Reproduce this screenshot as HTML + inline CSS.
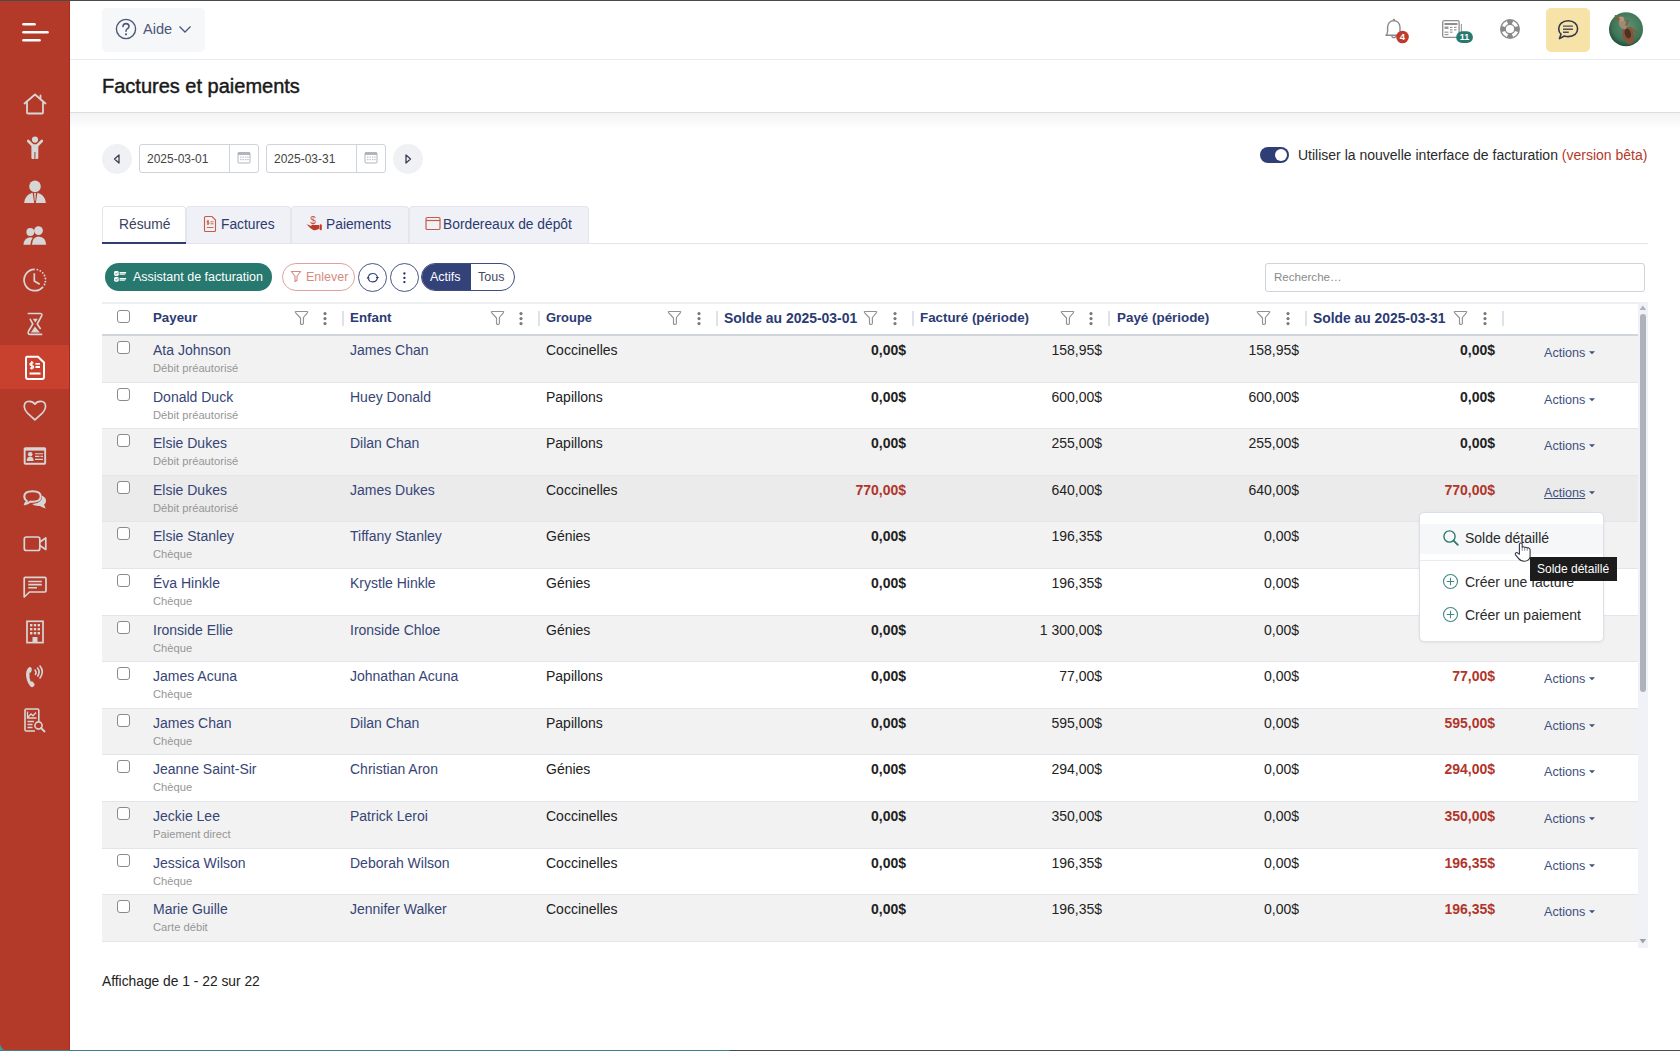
<!DOCTYPE html>
<html><head><meta charset="utf-8"><style>
*{box-sizing:border-box}
html,body{margin:0;padding:0}
body{width:1680px;height:1051px;overflow:hidden;position:relative;background:#fff;font-family:"Liberation Sans",sans-serif;color:#222}
.abs{position:absolute}
.si{position:absolute}
.t{position:absolute;white-space:nowrap;line-height:1}
.row{position:absolute;left:102px;width:1536px;border-bottom:1px solid #e3e5ea}
.cb{position:absolute;width:13px;height:13px;border:1.8px solid #8a8a8a;border-radius:3px;background:#fff}
.nm{position:absolute;white-space:nowrap;line-height:1;font-size:14px;color:#374576}
.sub{position:absolute;white-space:nowrap;line-height:1;font-size:11.2px;color:#969696}
.grp{position:absolute;white-space:nowrap;line-height:1;font-size:14px;color:#222}
.num{position:absolute;white-space:nowrap;line-height:1;font-size:14px;color:#222;text-align:right}
.b{font-weight:bold}
.red{color:#b0352b}
.act{position:absolute;white-space:nowrap;line-height:1;font-size:12.6px;color:#3e4f80}
.hd{position:absolute;white-space:nowrap;line-height:1;font-size:14.5px;font-weight:bold;color:#2b3b73}
.sep{position:absolute;width:1.5px;height:15px;background:#dfe2ea}
</style></head><body>

<div class="abs" style="left:0;top:0;width:1680px;height:1px;background:#4a4a4a;z-index:50"></div>
<div class="abs" style="left:0;top:1050px;width:1680px;height:1px;background:linear-gradient(90deg,#3f7f86 0,#3f7f86 730px,#4a4a4a 730px);z-index:50"></div>
<div class="abs" style="left:0;top:1040px;width:10px;height:11px;background:#3a9aa8"></div>
<div class="abs" style="left:0;top:0;width:70px;height:1051px;background:#b33a29;border-bottom-left-radius:8px"></div>
<div class="abs" style="left:0;top:345px;width:70px;height:44px;background:#c8412f"></div>
<div class="abs" style="left:69px;top:0;width:1px;height:1051px;background:#a92c1d"></div>

<svg class="si" style="left:20px;top:20px" width="32" height="26" viewBox="0 0 32 26"><g stroke="#fff" stroke-width="2.6" stroke-linecap="round"><line x1="3.5" y1="4.3" x2="14.5" y2="4.3"/><line x1="3.5" y1="12.3" x2="27.5" y2="12.3"/><line x1="3.5" y1="20.3" x2="19.5" y2="20.3"/></g></svg>
<svg class="si" style="left:23px;top:93px" width="24" height="22" viewBox="0 0 24 22"><path d="M1.5 10.5 L12 1.5 L22.5 10.5 M4 8.5 V19.5 Q4 20.5 5 20.5 H19 Q20 20.5 20 19.5 V8.5 M17.5 6.5 V2.5" fill="none" stroke="#d6d6d6" stroke-width="1.8" stroke-linejoin="round" stroke-linecap="round"/></svg>
<svg class="si" style="left:20px;top:132px" width="30" height="30" viewBox="0 0 30 30"><circle cx="15" cy="7.6" r="3.1" fill="#d6d6d6"/><path d="M8.2 9 L12.5 13.2 M21.8 9 L17.5 13.2" stroke="#d6d6d6" stroke-width="2.6" stroke-linecap="round"/><rect x="11.4" y="12.2" width="6.9" height="14.8" rx="1.3" fill="#d6d6d6"/><rect x="14.4" y="20" width="1" height="7.2" fill="#b33a29"/></svg>
<svg class="si" style="left:23px;top:180px" width="24" height="24" viewBox="0 0 24 24"><circle cx="12" cy="6.4" r="5.8" fill="#d6d6d6"/><path d="M1.1 22.9 Q1.5 15 9.6 12.7 L11.2 22.9 Z M22.9 22.9 Q22.5 15 14.4 12.7 L12.8 22.9 Z M11.1 13 H12.9 L12.4 20.2 L12 21.2 L11.6 20.2 Z" fill="#d6d6d6"/></svg>
<svg class="si" style="left:23px;top:226px" width="24" height="20" viewBox="0 0 24 20"><circle cx="7.3" cy="6" r="3.9" fill="#d6d6d6"/><circle cx="15.5" cy="4.6" r="4.4" fill="#d6d6d6"/><path d="M0.5 18.8 Q0.8 12 7.3 11.3 Q8.8 11.3 9.8 11.8 Q7.5 14.5 7.5 18.8 Z" fill="#d6d6d6"/><path d="M9 18.8 Q9.3 11 15.5 10.6 Q22.7 11 23.2 18.8 Z" fill="#d6d6d6"/></svg>
<svg class="si" style="left:22px;top:267px" width="26" height="26" viewBox="0 0 26 26"><path d="M21.00 19.88 A10.7 10.7 0 1 1 12.8 2.3000000000000007" fill="none" stroke="#d6d6d6" stroke-width="1.7"/><circle cx="15.39" cy="2.62" r="0.95" fill="#d6d6d6"/><circle cx="18.31" cy="3.83" r="0.95" fill="#d6d6d6"/><circle cx="20.75" cy="5.84" r="0.95" fill="#d6d6d6"/><circle cx="22.50" cy="8.48" r="0.95" fill="#d6d6d6"/><circle cx="23.40" cy="11.51" r="0.95" fill="#d6d6d6"/><circle cx="23.37" cy="14.67" r="0.95" fill="#d6d6d6"/><circle cx="22.50" cy="17.52" r="0.95" fill="#d6d6d6"/><path d="M12.3 6.2 V14.1 L17.7 17.3" fill="none" stroke="#d6d6d6" stroke-width="1.7"/></svg>
<svg class="si" style="left:18px;top:305px" width="34" height="35" viewBox="0 0 34 35"><path d="M10.3 8.5 H22.5 Q24.6 8.8 23.6 11 L19.2 19 L22.3 23.5 M12.3 14.3 L14.8 19 L10.6 26 Q9.2 29.4 12.3 29.4 H23.6" fill="none" stroke="#d6d6d6" stroke-width="1.6" stroke-linecap="round" stroke-linejoin="round"/><path d="M14.8 13.8 H19.8 L17.3 17.4 Z M16.9 21.6 L21.8 27.4 H12.9 Z" fill="#d6d6d6"/></svg>
<svg class="si" style="left:24px;top:355px" width="22" height="26" viewBox="0 0 22 26"><path d="M3 1.8 H14 L20 7.5 V22 Q20 24 18 24 H4 Q2 24 2 22 V3.8 Q2 1.8 3 1.8 Z" fill="none" stroke="#fff" stroke-width="2"/><path d="M7.8 6 V14.5 M9.5 7.8 H7.5 Q6 7.8 6 9.3 Q6 10.6 7.8 10.6 Q9.6 10.6 9.6 12 Q9.6 13.2 8 13.2 H6" fill="none" stroke="#fff" stroke-width="1.3"/><path d="M11.5 8.8 H16 M11.5 12 H16 M5.5 18.5 H16.5" stroke="#fff" stroke-width="1.8"/></svg>
<svg class="si" style="left:22px;top:399px" width="26" height="24" viewBox="0 0 26 24"><path d="M12.9 5.2 C11 2.4 8 2 5.6 2.5 C3 3.1 2.2 5.5 2.3 8 C2.5 10.5 3.8 12.4 5.5 14.1 L12.9 20.9 L20.3 14.1 C22 12.4 23.3 10.5 23.5 8 C23.6 5.5 22.8 3.1 20.2 2.5 C17.8 2 14.8 2.4 12.9 5.2 Z" fill="none" stroke="#d6d6d6" stroke-width="1.7" stroke-linejoin="round"/></svg>
<svg class="si" style="left:22px;top:446px" width="26" height="20" viewBox="0 0 26 20"><rect x="1.7" y="1.2" width="22.4" height="17.5" rx="1.6" fill="#d6d6d6"/><rect x="3.6" y="4.6" width="18.6" height="12.2" fill="#b33a29"/><circle cx="8.2" cy="8.2" r="2.3" fill="#d6d6d6"/><path d="M4.8 14.9 Q4.8 10.9 8.2 10.8 Q11.6 10.9 11.6 14.9 Z" fill="#d6d6d6"/><path d="M13 7.7 H21 M13 10.4 H17.5 M18.5 10.4 H21 M13 13.4 H21" stroke="#d6d6d6" stroke-width="1.1"/></svg>
<svg class="si" style="left:22px;top:489px" width="26" height="22" viewBox="0 0 26 22"><path d="M10.5 2.2 Q2.3 2.2 2.3 7.3 Q2.3 10.5 5 12 L2.8 15.3 Q6.5 14.3 8.5 12.6 Q9.5 12.8 10.5 12.8 Q18.7 12.8 18.7 7.3 Q18.7 2.2 10.5 2.2 Z" fill="none" stroke="#d6d6d6" stroke-width="2" stroke-linejoin="round"/><path d="M19.8 6.5 Q24.5 8.5 24 12.5 Q23.8 14.5 22 15.8 L23.8 19.5 Q19.5 18.3 18 17 Q12.8 17.5 10 15 Q17 14.8 19.8 10 Z" fill="#d6d6d6"/></svg>
<svg class="si" style="left:22px;top:534px" width="26" height="19" viewBox="0 0 26 19"><rect x="2.3" y="3" width="15.5" height="13.5" rx="2" fill="none" stroke="#d6d6d6" stroke-width="1.7"/><path d="M17.8 8 L23.8 4 V15.5 L17.8 11.5" fill="none" stroke="#d6d6d6" stroke-width="1.7" stroke-linejoin="round"/></svg>
<svg class="si" style="left:22px;top:575px" width="26" height="25" viewBox="0 0 26 25"><path d="M3.2 2.3 H22.8 Q24 2.3 24 3.5 V15.8 Q24 17 22.8 17 H7.5 L2.2 22 V3.5 Q2.2 2.3 3.2 2.3 Z" fill="none" stroke="#d6d6d6" stroke-width="1.7" stroke-linejoin="round"/><path d="M6.2 6.5 H19.8 M6.2 9.6 H19.8 M6.2 12.7 H15" stroke="#d6d6d6" stroke-width="1.6"/></svg>
<svg class="si" style="left:25px;top:619px" width="20" height="26" viewBox="0 0 20 26"><rect x="2" y="2.3" width="16" height="21.3" fill="none" stroke="#d6d6d6" stroke-width="1.7"/><g fill="#d6d6d6"><rect x="5" y="5" width="2.4" height="2.4"/><rect x="8.8" y="5" width="2.4" height="2.4"/><rect x="12.6" y="5" width="2.4" height="2.4"/><rect x="5" y="9" width="2.4" height="2.4"/><rect x="8.8" y="9" width="2.4" height="2.4"/><rect x="12.6" y="9" width="2.4" height="2.4"/><rect x="5" y="13" width="2.4" height="2.4"/><rect x="8.8" y="13" width="2.4" height="2.4"/><rect x="12.6" y="13" width="2.4" height="2.4"/><rect x="7.5" y="18" width="5" height="5"/></g></svg>
<svg class="si" style="left:24px;top:663px" width="22" height="26" viewBox="0 0 22 26"><path d="M5.5 4 Q2 6 2 12 Q2.5 19 6.5 23.5 Q8 24.8 9.5 23.5 L10.5 22.2 Q11 21 10 20.2 L8.5 18.5 Q7.5 18 6.8 18.8 Q5 15 5.5 9.5 Q6.5 10 7.2 9 L7.8 6.5 Q8 5 6.8 4.2 Z" fill="#d6d6d6"/><path d="M11 7 Q12.8 9 11.5 11.5 M13.5 5 Q16.5 8.5 13.8 13 M16 3 Q20.5 8.5 16 15" fill="none" stroke="#d6d6d6" stroke-width="1.6" stroke-linecap="round"/></svg>
<svg class="si" style="left:23px;top:707px" width="24" height="26" viewBox="0 0 24 26"><path d="M15.8 14 V3.3 Q15.8 2 14.5 2 H3.2 Q2 2 2 3.3 V22.7 Q2 24 3.2 24 H12" fill="none" stroke="#d6d6d6" stroke-width="1.6"/><path d="M4.5 4.5 V11 H13.5 M5 10 L8 7 L10 8.8 L13 5.5" fill="none" stroke="#d6d6d6" stroke-width="1.3"/><path d="M4.5 14.5 H11 M4.5 17.5 H9.5 M4.5 20.5 H9.5" stroke="#d6d6d6" stroke-width="1.5"/><circle cx="15.5" cy="18.5" r="3.6" fill="none" stroke="#d6d6d6" stroke-width="1.6"/><path d="M18 21 L21.5 24.5" stroke="#d6d6d6" stroke-width="1.8" stroke-linecap="round"/></svg>

<div class="abs" style="left:70px;top:59px;width:1610px;height:1px;background:#e8ebf1"></div>
<div class="abs" style="left:102px;top:8px;width:103px;height:44px;background:#f6f7f9;border-radius:5px"></div>
<svg class="abs" style="left:115px;top:18px" width="22" height="22" viewBox="0 0 22 22"><circle cx="11" cy="11" r="9.6" fill="none" stroke="#4c587a" stroke-width="1.4"/><path d="M8 8.6 Q8 5.6 11 5.6 Q14 5.6 14 8.3 Q14 10 12.2 10.9 Q11 11.5 11 13.2" fill="none" stroke="#4c587a" stroke-width="1.6" stroke-linecap="round"/><circle cx="11" cy="16.3" r="1.1" fill="#4c587a"/></svg>
<div class="t" style="left:143px;top:22px;font-size:14.6px;color:#4c587a">Aide</div>
<svg class="abs" style="left:178px;top:24px" width="14" height="10" viewBox="0 0 14 10"><path d="M1.5 2.5 L7 8 L12.5 2.5" fill="none" stroke="#4c587a" stroke-width="1.3"/></svg>


<svg class="abs" style="left:1380px;top:14px" width="30" height="32" viewBox="0 0 30 32"><path d="M13.8 6.6 Q8.2 7 7.6 13 V17.5 Q7.4 20 6 21.2 H21.6 Q20.2 20 20 17.5 V13 Q19.4 7 13.8 6.6 Z" fill="none" stroke="#8a8a8a" stroke-width="1.4" stroke-linejoin="round"/><circle cx="13.9" cy="5.8" r="1.1" fill="#8a8a8a"/><path d="M11.6 22.3 Q13.8 25.3 16 22.3" fill="none" stroke="#8a8a8a" stroke-width="1.5"/><circle cx="22.5" cy="23" r="6.3" fill="#bf3a2b"/><text x="22.5" y="26.4" font-size="9.5" font-weight="bold" fill="#fff" text-anchor="middle" font-family="Liberation Sans">4</text></svg>
<svg class="abs" style="left:1438px;top:16px" width="40" height="32" viewBox="0 0 40 32"><rect x="4.7" y="4.7" width="16.4" height="16.6" rx="1.5" fill="none" stroke="#8d8d8d" stroke-width="1.3"/><rect x="6.4" y="7" width="13" height="2" fill="#8d8d8d"/><g fill="#9a9a9a"><rect x="6.5" y="10.5" width="4" height="2.5"/><rect x="12" y="10.8" width="2.5" height="1.2"/><rect x="16" y="10.8" width="2.5" height="1.2"/><rect x="12" y="13.2" width="2.5" height="1.2"/><rect x="16" y="13.2" width="2.5" height="1.2"/><rect x="6.5" y="15.6" width="4" height="1.2"/><rect x="12" y="15.6" width="2.5" height="1.2"/><rect x="6.5" y="18" width="4" height="1.2"/></g><path d="M23.4 8 V16" stroke="#9a9a9a" stroke-width="1.1"/><rect x="18.2" y="15.3" width="16.7" height="11.8" rx="5.9" fill="#26796f"/><text x="26.5" y="24.4" font-size="9" font-weight="bold" fill="#fff" text-anchor="middle" font-family="Liberation Sans">11</text></svg>
<svg class="abs" style="left:1498px;top:17px" width="24" height="24" viewBox="0 0 24 24"><circle cx="12" cy="12" r="10" fill="#8a8a8a"/><path d="M20.12 15.12 A8.7 8.7 0 0 1 15.12 20.12 L13.94 17.04 A5.4 5.4 0 0 0 17.04 13.94 Z M8.88 20.12 A8.7 8.7 0 0 1 3.88 15.12 L6.96 13.94 A5.4 5.4 0 0 0 10.06 17.04 Z M3.88 8.88 A8.7 8.7 0 0 1 8.88 3.88 L10.06 6.96 A5.4 5.4 0 0 0 6.96 10.06 Z M15.12 3.88 A8.7 8.7 0 0 1 20.12 8.88 L17.04 10.06 A5.4 5.4 0 0 0 13.94 6.96 Z" fill="#fff"/><circle cx="12" cy="12" r="4.1" fill="#fff"/></svg>
<div class="abs" style="left:1546px;top:8px;width:44px;height:44px;background:#f7e3a8;border-radius:5px"></div>
<svg class="abs" style="left:1556px;top:18px" width="24" height="24" viewBox="0 0 24 24"><path d="M12.2 2.8 C18 2.8 21.6 6.3 21.6 10.8 C21.6 15.3 18 18.6 12.2 18.6 C10.8 18.6 9.6 18.4 8.4 18 L3.5 20.6 L5 16.2 C3.3 14.8 2.7 12.8 2.7 10.8 C2.7 6.3 6.4 2.8 12.2 2.8 Z" fill="none" stroke="#33384a" stroke-width="1.6" stroke-linejoin="round"/><path d="M7 8.1 H16.9 M7 11.3 H16.9 M7 14.3 H12.8" stroke="#4a4e5c" stroke-width="1.4"/></svg>
<svg class="abs" style="left:1608px;top:11px" width="37" height="37" viewBox="0 0 37 37"><defs><radialGradient id="av" cx="55%" cy="40%" r="60%"><stop offset="0" stop-color="#5c9173"/><stop offset="0.75" stop-color="#3f7456"/><stop offset="1" stop-color="#23503a"/></radialGradient></defs><filter id="avb"><feGaussianBlur stdDeviation="0.7"/></filter><circle cx="18" cy="18.3" r="17" fill="url(#av)"/><g filter="url(#avb)"><ellipse cx="20.3" cy="24.5" rx="5.6" ry="9" transform="rotate(-18 20.3 24.5)" fill="#85553a"/><ellipse cx="19.8" cy="22.5" rx="3" ry="5" transform="rotate(-18 19.8 22.5)" fill="#4e3020"/><ellipse cx="15" cy="13.5" rx="3.6" ry="5.2" transform="rotate(-38 15 13.5)" fill="#9f8a74"/><ellipse cx="13.3" cy="8" rx="3" ry="2.6" fill="#b8937a"/><path d="M7.5 5 L11 8.5 M20 9.5 L18.3 14 M28.5 21.5 L22 16.5" stroke="#8a5a3a" stroke-width="1.8" stroke-linecap="round"/></g></svg>

<div class="t" style="left:102px;top:76px;font-size:20px;color:#1a1a1a;-webkit-text-stroke:0.45px #1a1a1a;">Factures et paiements</div>
<div class="abs" style="left:70px;top:112px;width:1610px;height:1px;background:#dcdddf"></div>
<div class="abs" style="left:70px;top:113px;width:1610px;height:17px;background:linear-gradient(#f3f3f3,#fff)"></div>

<div class="abs" style="left:102px;top:144px;width:30px;height:30px;border-radius:50%;background:#f0f1f5"></div>
<svg class="abs" style="left:110px;top:152px" width="14" height="14" viewBox="0 0 14 14"><path d="M9 3 L4.5 7 L9 11 Z" fill="none" stroke="#3a3f55" stroke-width="1.3" stroke-linejoin="round"/></svg>
<div class="abs" style="left:139px;top:144px;width:120px;height:29px;border:1px solid #cfd3da;border-radius:3px;background:#fff"></div>
<div class="abs" style="left:229px;top:145px;width:1px;height:27px;background:#cfd3da"></div>
<div class="t" style="left:147px;top:153px;font-size:12px;color:#444">2025-03-01</div>
<div class="abs" style="left:266px;top:144px;width:120px;height:29px;border:1px solid #cfd3da;border-radius:3px;background:#fff"></div>
<div class="abs" style="left:356px;top:145px;width:1px;height:27px;background:#cfd3da"></div>
<div class="t" style="left:274px;top:153px;font-size:12px;color:#444">2025-03-31</div>
<div class="abs" style="left:393px;top:144px;width:30px;height:30px;border-radius:50%;background:#f0f1f5"></div>
<svg class="abs" style="left:401px;top:152px" width="14" height="14" viewBox="0 0 14 14"><path d="M5 3 L9.5 7 L5 11 Z" fill="none" stroke="#3a3f55" stroke-width="1.3" stroke-linejoin="round"/></svg>

<svg class="abs" style="left:237px;top:151px" width="14" height="14" viewBox="0 0 14 14"><rect x="1" y="1.5" width="12" height="10.5" rx="1" fill="none" stroke="#b0b4bc" stroke-width="1"/><rect x="1" y="1.5" width="12" height="2.5" fill="#b0b4bc"/><g fill="#c2c5cc"><rect x="3" y="5.5" width="1.5" height="1.2"/><rect x="5.5" y="5.5" width="1.5" height="1.2"/><rect x="8" y="5.5" width="1.5" height="1.2"/><rect x="10.2" y="5.5" width="1.5" height="1.2"/><rect x="3" y="8" width="1.5" height="1.2"/><rect x="5.5" y="8" width="1.5" height="1.2"/><rect x="8" y="8" width="1.5" height="1.2"/><rect x="10.2" y="8" width="1.5" height="1.2"/></g></svg>
<svg class="abs" style="left:364px;top:151px" width="14" height="14" viewBox="0 0 14 14"><rect x="1" y="1.5" width="12" height="10.5" rx="1" fill="none" stroke="#b0b4bc" stroke-width="1"/><rect x="1" y="1.5" width="12" height="2.5" fill="#b0b4bc"/><g fill="#c2c5cc"><rect x="3" y="5.5" width="1.5" height="1.2"/><rect x="5.5" y="5.5" width="1.5" height="1.2"/><rect x="8" y="5.5" width="1.5" height="1.2"/><rect x="10.2" y="5.5" width="1.5" height="1.2"/><rect x="3" y="8" width="1.5" height="1.2"/><rect x="5.5" y="8" width="1.5" height="1.2"/><rect x="8" y="8" width="1.5" height="1.2"/><rect x="10.2" y="8" width="1.5" height="1.2"/></g></svg>

<div class="abs" style="left:1260px;top:147px;width:29px;height:16px;border-radius:8px;background:#2f3e74"></div>
<div class="abs" style="left:1275px;top:149px;width:12px;height:12px;border-radius:50%;background:#fff"></div>
<div class="t" style="left:1298px;top:148px;font-size:14px;color:#2a2a2a">Utiliser la nouvelle interface de facturation <span style="color:#b53a2a">(version bêta)</span></div>


<div class="abs" style="left:102px;top:243px;width:1546px;height:1px;background:#e3e6ec"></div>
<div class="abs" style="left:102px;top:206px;width:84px;height:37px;background:#fff;border:1px solid #e3e6ec;border-bottom:none;border-radius:4px 4px 0 0"></div>
<div class="abs" style="left:102px;top:242px;width:84px;height:2px;background:#2f3e74"></div>
<div class="t" style="left:119px;top:218px;font-size:13.8px;color:#3b4160">Résumé</div>
<div class="abs" style="left:186px;top:206px;width:105px;height:37px;background:#eff1f6;border:1px solid #e3e6ec;border-bottom:none;border-radius:4px 4px 0 0"></div>
<div class="abs" style="left:291px;top:206px;width:118px;height:37px;background:#eff1f6;border:1px solid #e3e6ec;border-bottom:none;border-radius:4px 4px 0 0"></div>
<div class="abs" style="left:409px;top:206px;width:180px;height:37px;background:#eff1f6;border:1px solid #e3e6ec;border-bottom:none;border-radius:4px 4px 0 0"></div>
<svg class="abs" style="left:203px;top:215px" width="14" height="18" viewBox="0 0 14 18"><path d="M2.5 1.5 H9 L12.5 5 V15.5 Q12.5 16.5 11.5 16.5 H2.5 Q1.5 16.5 1.5 15.5 V2.5 Q1.5 1.5 2.5 1.5 Z" fill="none" stroke="#c85a48" stroke-width="1.1"/><path d="M5 5 V10 M6 6 H4.5 Q3.8 6 3.8 6.8 Q3.8 7.5 5 7.5 Q6.2 7.5 6.2 8.3 Q6.2 9 5.3 9 H3.8 M7.5 6.8 H10.5 M7.5 8.8 H10.5 M3.8 12.5 H10.5" fill="none" stroke="#c85a48" stroke-width="0.9"/></svg>
<div class="t" style="left:221px;top:218px;font-size:13.8px;color:#2d3a6e">Factures</div>
<svg class="abs" style="left:306px;top:215px" width="17" height="17" viewBox="0 0 17 17"><text x="7" y="8.8" font-size="10" fill="#c8553f" font-family="Liberation Sans" text-anchor="middle">$</text><path d="M0.6 9.2 Q3 9.8 5 10.9 L5.8 9.9 H13.2 V13.8 Q10 15.7 7.2 15 Q3.8 13 0.6 9.2 Z" fill="#c0392b"/><rect x="13.6" y="9.3" width="2.2" height="6" rx="1.1" fill="#c0392b"/></svg>
<div class="t" style="left:326px;top:218px;font-size:13.8px;color:#2d3a6e">Paiements</div>
<svg class="abs" style="left:425px;top:216px" width="16" height="15" viewBox="0 0 16 15"><rect x="1" y="1.5" width="14" height="12" rx="1.2" fill="none" stroke="#c85a48" stroke-width="1.2"/><path d="M1 4.5 H15" stroke="#c85a48" stroke-width="1.2"/></svg>
<div class="t" style="left:443px;top:218px;font-size:13.8px;color:#2d3a6e">Bordereaux de dépôt</div>


<div class="abs" style="left:105px;top:263px;width:167px;height:28px;border-radius:14px;background:#27786f"></div>
<svg class="abs" style="left:113px;top:270px" width="14" height="14" viewBox="0 0 14 14"><rect x="1.1" y="1.1" width="4.6" height="4.8" rx="1.4" fill="#fff"/><rect x="1.1" y="7.1" width="4.6" height="4.6" rx="1.4" fill="#fff"/><path d="M2.3 3.6 L3.2 4.4 L4.6 2.6 M2.3 9.5 L3.2 10.3 L4.6 8.5" fill="none" stroke="#27786f" stroke-width="0.7"/><rect x="6.6" y="2" width="6.5" height="1.5" fill="#fff"/><rect x="6.6" y="3.5" width="5.5" height="1.4" fill="#cfe3e0"/><rect x="6.6" y="8" width="6.5" height="1.5" fill="#fff"/><rect x="6.6" y="9.5" width="5.5" height="1.4" fill="#cfe3e0"/></svg>
<div class="t" style="left:133px;top:271px;font-size:12.5px;color:#fff">Assistant de facturation</div>
<div class="abs" style="left:282px;top:263px;width:73px;height:28px;border-radius:14px;border:1px solid #e0a39b;background:#fff"></div>
<svg class="abs" style="left:290px;top:270px" width="12" height="13" viewBox="0 0 12 13"><path d="M1.3 1.5 H10.7 L7 6 V10.5 L5 11.5 V6 Z" fill="none" stroke="#d98a80" stroke-width="1.1" stroke-linejoin="round"/></svg>
<div class="t" style="left:306px;top:271px;font-size:12.5px;color:#d98a80">Enlever</div>
<div class="abs" style="left:358px;top:263px;width:29px;height:29px;border-radius:50%;border:1.2px solid #4a5688;background:#fff"></div>
<svg class="abs" style="left:364px;top:269px" width="16" height="16" viewBox="0 0 16 16"><path d="M4.2 7.6 A4.9 4.9 0 0 1 13.4 7.9 M13.2 10 A4.9 4.9 0 0 1 4.1 9.6" fill="none" stroke="#33407a" stroke-width="1.1"/><path d="M11.6 8 H15 L13.3 10.2 Z M2.5 9.4 H5.9 L4.2 7.2 Z" fill="#1f2a5e"/></svg>
<div class="abs" style="left:390px;top:263px;width:29px;height:29px;border-radius:50%;border:1.2px solid #4a5688;background:#fff"></div>
<svg class="abs" style="left:401px;top:269px" width="6" height="16" viewBox="0 0 6 16"><circle cx="3.4" cy="4.5" r="1.15" fill="#1f2a5e"/><circle cx="3.4" cy="8.9" r="1.15" fill="#1f2a5e"/><circle cx="3.4" cy="13.1" r="1.15" fill="#1f2a5e"/></svg>
<div class="abs" style="left:421px;top:263px;width:94px;height:28px;border-radius:14px;border:1px solid #3e4c80;background:#fff;overflow:hidden"><div style="position:absolute;left:0;top:0;width:49px;height:28px;background:#33437a"></div></div>
<div class="t" style="left:430px;top:271px;font-size:12.5px;color:#fff">Actifs</div>
<div class="t" style="left:478px;top:271px;font-size:12.5px;color:#444b66">Tous</div>
<div class="abs" style="left:1265px;top:263px;width:380px;height:29px;border:1px solid #cfd3da;border-radius:3px;background:#fff"></div>
<div class="t" style="left:1274px;top:271px;font-size:11.6px;color:#8a8a8a">Recherche…</div>

<div class="abs" style="left:102px;top:302px;width:1536px;height:2px;background:#eeeff1"></div>
<div class="abs" style="left:102px;top:304px;width:1536px;height:30px;background:#fff"></div>
<div class="abs" style="left:102px;top:334px;width:1536px;height:2px;background:#d1d5dc"></div>
<div class="cb" style="left:117px;top:310px"></div>
<div class="hd" style="left:153px;top:311px;font-size:13.3px">Payeur</div>
<svg style="position:absolute;left:294px;top:310px" width="15" height="16" viewBox="0 0 15 16"><path d="M1.8 1.5 H13.2 Q14 1.5 13.5 2.6 L9.4 7.5 V13.2 Q9.4 14.3 8 14.3 H7.2 Q6.5 14.3 6.5 13.5 V8 L1.5 2.6 Q1 1.5 1.8 1.5 Z" fill="none" stroke="#929292" stroke-width="1.15" stroke-linejoin="round"/></svg>
<svg style="position:absolute;left:322px;top:311px" width="6" height="16" viewBox="0 0 6 16"><circle cx="3" cy="2.6" r="1.6" fill="#7a7a7a"/><circle cx="3" cy="7.6" r="1.6" fill="#7a7a7a"/><circle cx="3" cy="12.6" r="1.6" fill="#7a7a7a"/></svg>
<div class="sep" style="left:342px;top:311px"></div>
<div class="hd" style="left:350px;top:311px;font-size:13.37px">Enfant</div>
<svg style="position:absolute;left:490px;top:310px" width="15" height="16" viewBox="0 0 15 16"><path d="M1.8 1.5 H13.2 Q14 1.5 13.5 2.6 L9.4 7.5 V13.2 Q9.4 14.3 8 14.3 H7.2 Q6.5 14.3 6.5 13.5 V8 L1.5 2.6 Q1 1.5 1.8 1.5 Z" fill="none" stroke="#929292" stroke-width="1.15" stroke-linejoin="round"/></svg>
<svg style="position:absolute;left:518px;top:311px" width="6" height="16" viewBox="0 0 6 16"><circle cx="3" cy="2.6" r="1.6" fill="#7a7a7a"/><circle cx="3" cy="7.6" r="1.6" fill="#7a7a7a"/><circle cx="3" cy="12.6" r="1.6" fill="#7a7a7a"/></svg>
<div class="sep" style="left:538px;top:311px"></div>
<div class="hd" style="left:546px;top:312px;font-size:12.95px">Groupe</div>
<svg style="position:absolute;left:667px;top:310px" width="15" height="16" viewBox="0 0 15 16"><path d="M1.8 1.5 H13.2 Q14 1.5 13.5 2.6 L9.4 7.5 V13.2 Q9.4 14.3 8 14.3 H7.2 Q6.5 14.3 6.5 13.5 V8 L1.5 2.6 Q1 1.5 1.8 1.5 Z" fill="none" stroke="#929292" stroke-width="1.15" stroke-linejoin="round"/></svg>
<svg style="position:absolute;left:696px;top:311px" width="6" height="16" viewBox="0 0 6 16"><circle cx="3" cy="2.6" r="1.6" fill="#7a7a7a"/><circle cx="3" cy="7.6" r="1.6" fill="#7a7a7a"/><circle cx="3" cy="12.6" r="1.6" fill="#7a7a7a"/></svg>
<div class="sep" style="left:716px;top:311px"></div>
<div class="hd" style="left:724px;top:312px;font-size:13.95px">Solde au 2025-03-01</div>
<svg style="position:absolute;left:863px;top:310px" width="15" height="16" viewBox="0 0 15 16"><path d="M1.8 1.5 H13.2 Q14 1.5 13.5 2.6 L9.4 7.5 V13.2 Q9.4 14.3 8 14.3 H7.2 Q6.5 14.3 6.5 13.5 V8 L1.5 2.6 Q1 1.5 1.8 1.5 Z" fill="none" stroke="#929292" stroke-width="1.15" stroke-linejoin="round"/></svg>
<svg style="position:absolute;left:892px;top:311px" width="6" height="16" viewBox="0 0 6 16"><circle cx="3" cy="2.6" r="1.6" fill="#7a7a7a"/><circle cx="3" cy="7.6" r="1.6" fill="#7a7a7a"/><circle cx="3" cy="12.6" r="1.6" fill="#7a7a7a"/></svg>
<div class="sep" style="left:912px;top:311px"></div>
<div class="hd" style="left:920px;top:311px;font-size:13.35px">Facturé (période)</div>
<svg style="position:absolute;left:1060px;top:310px" width="15" height="16" viewBox="0 0 15 16"><path d="M1.8 1.5 H13.2 Q14 1.5 13.5 2.6 L9.4 7.5 V13.2 Q9.4 14.3 8 14.3 H7.2 Q6.5 14.3 6.5 13.5 V8 L1.5 2.6 Q1 1.5 1.8 1.5 Z" fill="none" stroke="#929292" stroke-width="1.15" stroke-linejoin="round"/></svg>
<svg style="position:absolute;left:1088px;top:311px" width="6" height="16" viewBox="0 0 6 16"><circle cx="3" cy="2.6" r="1.6" fill="#7a7a7a"/><circle cx="3" cy="7.6" r="1.6" fill="#7a7a7a"/><circle cx="3" cy="12.6" r="1.6" fill="#7a7a7a"/></svg>
<div class="sep" style="left:1108px;top:311px"></div>
<div class="hd" style="left:1117px;top:311px;font-size:13.4px">Payé (période)</div>
<svg style="position:absolute;left:1256px;top:310px" width="15" height="16" viewBox="0 0 15 16"><path d="M1.8 1.5 H13.2 Q14 1.5 13.5 2.6 L9.4 7.5 V13.2 Q9.4 14.3 8 14.3 H7.2 Q6.5 14.3 6.5 13.5 V8 L1.5 2.6 Q1 1.5 1.8 1.5 Z" fill="none" stroke="#929292" stroke-width="1.15" stroke-linejoin="round"/></svg>
<svg style="position:absolute;left:1285px;top:311px" width="6" height="16" viewBox="0 0 6 16"><circle cx="3" cy="2.6" r="1.6" fill="#7a7a7a"/><circle cx="3" cy="7.6" r="1.6" fill="#7a7a7a"/><circle cx="3" cy="12.6" r="1.6" fill="#7a7a7a"/></svg>
<div class="sep" style="left:1305px;top:311px"></div>
<div class="hd" style="left:1313px;top:312px;font-size:13.85px">Solde au 2025-03-31</div>
<svg style="position:absolute;left:1453px;top:310px" width="15" height="16" viewBox="0 0 15 16"><path d="M1.8 1.5 H13.2 Q14 1.5 13.5 2.6 L9.4 7.5 V13.2 Q9.4 14.3 8 14.3 H7.2 Q6.5 14.3 6.5 13.5 V8 L1.5 2.6 Q1 1.5 1.8 1.5 Z" fill="none" stroke="#929292" stroke-width="1.15" stroke-linejoin="round"/></svg>
<svg style="position:absolute;left:1482px;top:311px" width="6" height="16" viewBox="0 0 6 16"><circle cx="3" cy="2.6" r="1.6" fill="#7a7a7a"/><circle cx="3" cy="7.6" r="1.6" fill="#7a7a7a"/><circle cx="3" cy="12.6" r="1.6" fill="#7a7a7a"/></svg>
<div class="sep" style="left:1502px;top:311px"></div>
<div class="row" style="top:336px;height:47px;background:#f2f2f2"></div>
<div class="cb" style="left:117px;top:341px"></div>
<div class="nm" style="left:153px;top:343px">Ata Johnson</div>
<div class="sub" style="left:153px;top:363px">Débit préautorisé</div>
<div class="nm" style="left:350px;top:343px">James Chan</div>
<div class="grp" style="left:546px;top:343px">Coccinelles</div>
<div class="num b" style="left:706px;width:200px;top:343px">0,00$</div>
<div class="num" style="left:902px;width:200px;top:343px">158,95$</div>
<div class="num" style="left:1099px;width:200px;top:343px">158,95$</div>
<div class="num b" style="left:1295px;width:200px;top:343px">0,00$</div>
<div class="act" style="left:1544px;top:347px;">Actions</div>
<svg class="abs" style="left:1588px;top:351px" width="8" height="5" viewBox="0 0 8 5"><path d="M1 0.3 H7 L4 3.3 Z" fill="#3e4f80"/></svg>
<div class="row" style="top:383px;height:46px;background:#fff"></div>
<div class="cb" style="left:117px;top:388px"></div>
<div class="nm" style="left:153px;top:390px">Donald Duck</div>
<div class="sub" style="left:153px;top:410px">Débit préautorisé</div>
<div class="nm" style="left:350px;top:390px">Huey Donald</div>
<div class="grp" style="left:546px;top:390px">Papillons</div>
<div class="num b" style="left:706px;width:200px;top:390px">0,00$</div>
<div class="num" style="left:902px;width:200px;top:390px">600,00$</div>
<div class="num" style="left:1099px;width:200px;top:390px">600,00$</div>
<div class="num b" style="left:1295px;width:200px;top:390px">0,00$</div>
<div class="act" style="left:1544px;top:394px;">Actions</div>
<svg class="abs" style="left:1588px;top:398px" width="8" height="5" viewBox="0 0 8 5"><path d="M1 0.3 H7 L4 3.3 Z" fill="#3e4f80"/></svg>
<div class="row" style="top:429px;height:47px;background:#f2f2f2"></div>
<div class="cb" style="left:117px;top:434px"></div>
<div class="nm" style="left:153px;top:436px">Elsie Dukes</div>
<div class="sub" style="left:153px;top:456px">Débit préautorisé</div>
<div class="nm" style="left:350px;top:436px">Dilan Chan</div>
<div class="grp" style="left:546px;top:436px">Papillons</div>
<div class="num b" style="left:706px;width:200px;top:436px">0,00$</div>
<div class="num" style="left:902px;width:200px;top:436px">255,00$</div>
<div class="num" style="left:1099px;width:200px;top:436px">255,00$</div>
<div class="num b" style="left:1295px;width:200px;top:436px">0,00$</div>
<div class="act" style="left:1544px;top:440px;">Actions</div>
<svg class="abs" style="left:1588px;top:444px" width="8" height="5" viewBox="0 0 8 5"><path d="M1 0.3 H7 L4 3.3 Z" fill="#3e4f80"/></svg>
<div class="row" style="top:476px;height:46px;background:#ebebeb"></div>
<div class="cb" style="left:117px;top:481px"></div>
<div class="nm" style="left:153px;top:483px">Elsie Dukes</div>
<div class="sub" style="left:153px;top:503px">Débit préautorisé</div>
<div class="nm" style="left:350px;top:483px">James Dukes</div>
<div class="grp" style="left:546px;top:483px">Coccinelles</div>
<div class="num b red" style="left:706px;width:200px;top:483px">770,00$</div>
<div class="num" style="left:902px;width:200px;top:483px">640,00$</div>
<div class="num" style="left:1099px;width:200px;top:483px">640,00$</div>
<div class="num b red" style="left:1295px;width:200px;top:483px">770,00$</div>
<div class="act" style="left:1544px;top:487px;text-decoration:underline;">Actions</div>
<svg class="abs" style="left:1588px;top:491px" width="8" height="5" viewBox="0 0 8 5"><path d="M1 0.3 H7 L4 3.3 Z" fill="#3e4f80"/></svg>
<div class="row" style="top:522px;height:47px;background:#f2f2f2"></div>
<div class="cb" style="left:117px;top:527px"></div>
<div class="nm" style="left:153px;top:529px">Elsie Stanley</div>
<div class="sub" style="left:153px;top:549px">Chèque</div>
<div class="nm" style="left:350px;top:529px">Tiffany Stanley</div>
<div class="grp" style="left:546px;top:529px">Génies</div>
<div class="num b" style="left:706px;width:200px;top:529px">0,00$</div>
<div class="num" style="left:902px;width:200px;top:529px">196,35$</div>
<div class="num" style="left:1099px;width:200px;top:529px">0,00$</div>
<div class="row" style="top:569px;height:47px;background:#fff"></div>
<div class="cb" style="left:117px;top:574px"></div>
<div class="nm" style="left:153px;top:576px">Éva Hinkle</div>
<div class="sub" style="left:153px;top:596px">Chèque</div>
<div class="nm" style="left:350px;top:576px">Krystle Hinkle</div>
<div class="grp" style="left:546px;top:576px">Génies</div>
<div class="num b" style="left:706px;width:200px;top:576px">0,00$</div>
<div class="num" style="left:902px;width:200px;top:576px">196,35$</div>
<div class="num" style="left:1099px;width:200px;top:576px">0,00$</div>
<div class="row" style="top:616px;height:46px;background:#f2f2f2"></div>
<div class="cb" style="left:117px;top:621px"></div>
<div class="nm" style="left:153px;top:623px">Ironside Ellie</div>
<div class="sub" style="left:153px;top:643px">Chèque</div>
<div class="nm" style="left:350px;top:623px">Ironside Chloe</div>
<div class="grp" style="left:546px;top:623px">Génies</div>
<div class="num b" style="left:706px;width:200px;top:623px">0,00$</div>
<div class="num" style="left:902px;width:200px;top:623px">1 300,00$</div>
<div class="num" style="left:1099px;width:200px;top:623px">0,00$</div>
<div class="row" style="top:662px;height:47px;background:#fff"></div>
<div class="cb" style="left:117px;top:667px"></div>
<div class="nm" style="left:153px;top:669px">James Acuna</div>
<div class="sub" style="left:153px;top:689px">Chèque</div>
<div class="nm" style="left:350px;top:669px">Johnathan Acuna</div>
<div class="grp" style="left:546px;top:669px">Papillons</div>
<div class="num b" style="left:706px;width:200px;top:669px">0,00$</div>
<div class="num" style="left:902px;width:200px;top:669px">77,00$</div>
<div class="num" style="left:1099px;width:200px;top:669px">0,00$</div>
<div class="num b red" style="left:1295px;width:200px;top:669px">77,00$</div>
<div class="act" style="left:1544px;top:673px;">Actions</div>
<svg class="abs" style="left:1588px;top:677px" width="8" height="5" viewBox="0 0 8 5"><path d="M1 0.3 H7 L4 3.3 Z" fill="#3e4f80"/></svg>
<div class="row" style="top:709px;height:46px;background:#f2f2f2"></div>
<div class="cb" style="left:117px;top:714px"></div>
<div class="nm" style="left:153px;top:716px">James Chan</div>
<div class="sub" style="left:153px;top:736px">Chèque</div>
<div class="nm" style="left:350px;top:716px">Dilan Chan</div>
<div class="grp" style="left:546px;top:716px">Papillons</div>
<div class="num b" style="left:706px;width:200px;top:716px">0,00$</div>
<div class="num" style="left:902px;width:200px;top:716px">595,00$</div>
<div class="num" style="left:1099px;width:200px;top:716px">0,00$</div>
<div class="num b red" style="left:1295px;width:200px;top:716px">595,00$</div>
<div class="act" style="left:1544px;top:720px;">Actions</div>
<svg class="abs" style="left:1588px;top:724px" width="8" height="5" viewBox="0 0 8 5"><path d="M1 0.3 H7 L4 3.3 Z" fill="#3e4f80"/></svg>
<div class="row" style="top:755px;height:47px;background:#fff"></div>
<div class="cb" style="left:117px;top:760px"></div>
<div class="nm" style="left:153px;top:762px">Jeanne Saint-Sir</div>
<div class="sub" style="left:153px;top:782px">Chèque</div>
<div class="nm" style="left:350px;top:762px">Christian Aron</div>
<div class="grp" style="left:546px;top:762px">Génies</div>
<div class="num b" style="left:706px;width:200px;top:762px">0,00$</div>
<div class="num" style="left:902px;width:200px;top:762px">294,00$</div>
<div class="num" style="left:1099px;width:200px;top:762px">0,00$</div>
<div class="num b red" style="left:1295px;width:200px;top:762px">294,00$</div>
<div class="act" style="left:1544px;top:766px;">Actions</div>
<svg class="abs" style="left:1588px;top:770px" width="8" height="5" viewBox="0 0 8 5"><path d="M1 0.3 H7 L4 3.3 Z" fill="#3e4f80"/></svg>
<div class="row" style="top:802px;height:47px;background:#f2f2f2"></div>
<div class="cb" style="left:117px;top:807px"></div>
<div class="nm" style="left:153px;top:809px">Jeckie Lee</div>
<div class="sub" style="left:153px;top:829px">Paiement direct</div>
<div class="nm" style="left:350px;top:809px">Patrick Leroi</div>
<div class="grp" style="left:546px;top:809px">Coccinelles</div>
<div class="num b" style="left:706px;width:200px;top:809px">0,00$</div>
<div class="num" style="left:902px;width:200px;top:809px">350,00$</div>
<div class="num" style="left:1099px;width:200px;top:809px">0,00$</div>
<div class="num b red" style="left:1295px;width:200px;top:809px">350,00$</div>
<div class="act" style="left:1544px;top:813px;">Actions</div>
<svg class="abs" style="left:1588px;top:817px" width="8" height="5" viewBox="0 0 8 5"><path d="M1 0.3 H7 L4 3.3 Z" fill="#3e4f80"/></svg>
<div class="row" style="top:849px;height:46px;background:#fff"></div>
<div class="cb" style="left:117px;top:854px"></div>
<div class="nm" style="left:153px;top:856px">Jessica Wilson</div>
<div class="sub" style="left:153px;top:876px">Chèque</div>
<div class="nm" style="left:350px;top:856px">Deborah Wilson</div>
<div class="grp" style="left:546px;top:856px">Coccinelles</div>
<div class="num b" style="left:706px;width:200px;top:856px">0,00$</div>
<div class="num" style="left:902px;width:200px;top:856px">196,35$</div>
<div class="num" style="left:1099px;width:200px;top:856px">0,00$</div>
<div class="num b red" style="left:1295px;width:200px;top:856px">196,35$</div>
<div class="act" style="left:1544px;top:860px;">Actions</div>
<svg class="abs" style="left:1588px;top:864px" width="8" height="5" viewBox="0 0 8 5"><path d="M1 0.3 H7 L4 3.3 Z" fill="#3e4f80"/></svg>
<div class="row" style="top:895px;height:47px;background:#f2f2f2"></div>
<div class="cb" style="left:117px;top:900px"></div>
<div class="nm" style="left:153px;top:902px">Marie Guille</div>
<div class="sub" style="left:153px;top:922px">Carte débit</div>
<div class="nm" style="left:350px;top:902px">Jennifer Walker</div>
<div class="grp" style="left:546px;top:902px">Coccinelles</div>
<div class="num b" style="left:706px;width:200px;top:902px">0,00$</div>
<div class="num" style="left:902px;width:200px;top:902px">196,35$</div>
<div class="num" style="left:1099px;width:200px;top:902px">0,00$</div>
<div class="num b red" style="left:1295px;width:200px;top:902px">196,35$</div>
<div class="act" style="left:1544px;top:906px;">Actions</div>
<svg class="abs" style="left:1588px;top:910px" width="8" height="5" viewBox="0 0 8 5"><path d="M1 0.3 H7 L4 3.3 Z" fill="#3e4f80"/></svg>

<div class="abs" style="left:1638px;top:302px;width:10px;height:646px;background:#f1f2f7"></div>
<div class="abs" style="left:1640px;top:314px;width:6px;height:378px;border-radius:3px;background:#adb2bb"></div>
<svg class="abs" style="left:1638px;top:304px" width="10" height="8" viewBox="0 0 10 8"><path d="M1.5 6 L4.8 1.5 L8.2 6 Z" fill="#adb2bb"/></svg>
<svg class="abs" style="left:1638px;top:937px" width="10" height="8" viewBox="0 0 10 8"><path d="M1.5 2 L4.8 6.5 L8.2 2 Z" fill="#9ea2aa"/></svg>

<div class="t" style="left:102px;top:975px;font-size:13.8px;color:#222">Affichage de 1 - 22 sur 22</div>

<div class="abs" style="left:1419px;top:512px;width:185px;height:130px;background:#fff;border:1px solid #dcdfe5;border-radius:5px;box-shadow:0 1px 3px rgba(0,0,0,0.06)"></div>
<div class="abs" style="left:1420px;top:524px;width:183px;height:30px;background:#f6f7f9"></div>
<div class="abs" style="left:1420px;top:560px;width:183px;height:1px;background:#e9ebef"></div>
<svg class="abs" style="left:1442px;top:529px" width="18" height="18" viewBox="0 0 18 18"><circle cx="7.5" cy="7.5" r="5.6" fill="none" stroke="#2f7a70" stroke-width="1.4"/><path d="M11.6 11.6 L15.8 15.8" stroke="#2f7a70" stroke-width="1.9" stroke-linecap="round"/></svg>
<div class="t" style="left:1465px;top:531px;font-size:14px;color:#2a2a2a">Solde détaillé</div>
<svg class="abs" style="left:1442px;top:573px" width="17" height="17" viewBox="0 0 17 17"><circle cx="8.5" cy="8.5" r="7" fill="none" stroke="#3f8a7f" stroke-width="1.1"/><path d="M8.5 4.8 V12.2 M4.8 8.5 H12.2" stroke="#3f8a7f" stroke-width="1.1"/></svg>
<div class="t" style="left:1465px;top:575px;font-size:14px;color:#2a2a2a">Créer une facture</div>
<svg class="abs" style="left:1442px;top:606px" width="17" height="17" viewBox="0 0 17 17"><circle cx="8.5" cy="8.5" r="7" fill="none" stroke="#3f8a7f" stroke-width="1.1"/><path d="M8.5 4.8 V12.2 M4.8 8.5 H12.2" stroke="#3f8a7f" stroke-width="1.1"/></svg>
<div class="t" style="left:1465px;top:608px;font-size:14px;color:#2a2a2a">Créer un paiement</div>
<div class="abs" style="left:1530px;top:557px;width:87px;height:24px;background:#1c1c1c"></div>
<div class="t" style="left:1537px;top:563px;font-size:12px;color:#fff">Solde détaillé</div>
<svg class="abs" style="left:1505px;top:535px" width="35" height="35" viewBox="0 0 35 35"><path d="M14.4 9 Q15.6 7.3 17.2 8.6 V12.3 Q18.4 11.3 19.7 12.4 Q21 11.8 22.2 12.9 Q23.6 12.5 24.7 13.8 Q25.1 14.4 25.1 15.3 V21.5 Q24.6 26 19.2 26.2 Q15.6 26.2 13.2 23.2 L10.4 19.6 Q10 17.4 12.1 17.6 L14.4 19.3 Z" fill="#fff" stroke="#2f3242" stroke-width="1.05" stroke-linejoin="round"/><path d="M17.2 12.3 V15.8 M19.7 12.4 V15.8 M22.2 12.9 V15.8" stroke="#6a6d7a" stroke-width="0.8"/></svg>

</body></html>
